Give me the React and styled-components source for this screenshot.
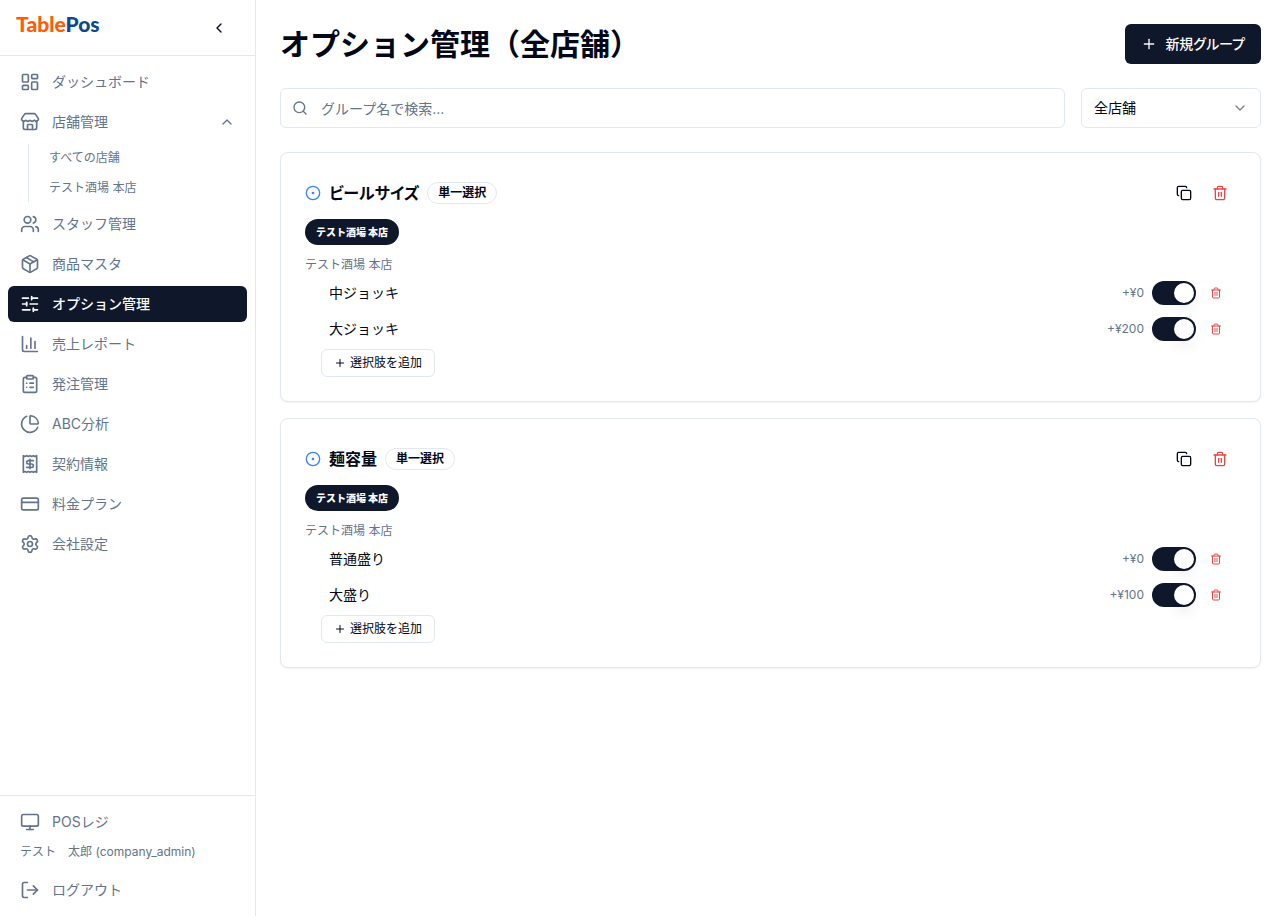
import React, { useState } from 'react';
import styled, { createGlobalStyle, css } from 'styled-components';
import {
    LayoutDashboard, Store, Users, Package, SlidersHorizontal, ChartColumn,
    ClipboardList, ChartPie, CreditCard, Settings, Monitor, LogOut,
    ChevronLeft, ChevronUp, ChevronDown, Plus, Search, Copy, Trash2, CircleDot,
} from 'lucide-react';

const colors = {
    text: '#020817',
    muted: '#64748b',
    border: '#e2e8f0',
    primary: '#0f172a',
    light: '#f8fafc',
    danger: '#ef4444',
    info: '#3b82f6',
};

const GlobalStyle = createGlobalStyle`
*, *::before, *::after {
    box-sizing: border-box;
}
body {
    margin: 0;
    background: white;
    color: ${colors.text};
    font-family: Inter, 'Noto Sans CJK JP', sans-serif;
    font-size: 14px;
    line-height: 20px;
}
h1, h2, p, ul {
    margin: 0;
    padding: 0;
}
ul {
    list-style: none;
}
button, input, select {
    font: inherit;
    color: inherit;
}
button {
    border: 0;
    background: none;
    padding: 0;
    cursor: pointer;
}
svg {
    flex-shrink: 0;
}
`;

const Layout = styled.div`
    display: grid;
    grid-template-columns: 256px 1fr;
    min-height: 100vh;
`;

const Sidebar = styled.aside`
    display: flex;
    flex-direction: column;
    border-right: 1px solid ${colors.border};
    color: ${colors.muted};
`;

const SidebarHeader = styled.div`
    display: flex;
    align-items: center;
    justify-content: space-between;
    height: 56px;
    padding: 0 16px;
    border-bottom: 1px solid ${colors.border};
`;

const Logo = styled.a`
    align-self: flex-start;
    padding-top: 10px;
    color: #ff5c0a;
    font-family: Lato, sans-serif;
    font-size: 21px;
    font-weight: 900;
    line-height: 28px;
    text-decoration: none;
    span {
        color: #0b4a8a;
    }
`;

const CollapseButton = styled.button`
    display: flex;
    align-items: center;
    justify-content: center;
    width: 40px;
    height: 40px;
    color: ${colors.text};
`;

const Nav = styled.nav`
    flex: 1;
    padding: 8px;
`;

const NavList = styled.ul`
    display: flex;
    flex-direction: column;
    gap: 4px;
`;

const navItem = css`
    display: flex;
    align-items: center;
    gap: 12px;
    width: 100%;
    height: 36px;
    padding: 0 12px;
    border-radius: 6px;
    text-align: left;
    text-decoration: none;
    color: ${colors.muted};
`;

const NavLink = styled.a`
    ${navItem}
    ${({ $active }) => $active && css`
        background: ${colors.primary};
        color: ${colors.light};
        font-weight: 500;
    `}
`;

const NavButton = styled.button`
    ${navItem}
    span {
        flex: 1;
    }
`;

const SubList = styled.ul`
    display: flex;
    flex-direction: column;
    gap: 2px;
    margin: 4px 0 0 20px;
    padding-left: 8px;
    border-left: 1px solid ${colors.border};
`;

const SubLink = styled.a`
    display: block;
    padding: 6px 12px;
    color: ${colors.muted};
    font-size: 12px;
    line-height: 16px;
    text-decoration: none;
`;

const SidebarFooter = styled.div`
    padding: 8px;
    border-top: 1px solid ${colors.border};
`;

const UserName = styled.p`
    padding: 4px 12px;
    margin-bottom: 8px;
    font-size: 12px;
    line-height: 16px;
`;

const Main = styled.main`
    display: flex;
    flex-direction: column;
    gap: 24px;
    min-width: 0;
    padding: 24px;
`;

const PageHeader = styled.header`
    display: flex;
    align-items: center;
    justify-content: space-between;
`;

const Title = styled.h1`
    font-size: 30px;
    font-weight: 700;
    line-height: 36px;
`;

const PrimaryButton = styled.button`
    display: flex;
    align-items: center;
    gap: 8px;
    height: 40px;
    padding: 0 16px;
    border-radius: 6px;
    background: ${colors.primary};
    color: ${colors.light};
    font-weight: 500;
    font-feature-settings: 'palt';
`;

const Filters = styled.div`
    display: flex;
    gap: 16px;
`;

const fieldBox = css`
    display: flex;
    align-items: center;
    height: 40px;
    border: 1px solid ${colors.border};
    border-radius: 6px;
    background: white;
`;

const SearchBox = styled.label`
    ${fieldBox}
    flex: 1;
    gap: 13px;
    padding: 0 12px 0 11px;
    color: ${colors.muted};
`;

const SearchInput = styled.input`
    flex: 1;
    min-width: 0;
    height: 100%;
    padding: 0;
    border: 0;
    outline: 0;
    background: none;
    color: ${colors.text};
    &::placeholder {
        color: ${colors.muted};
        opacity: 1;
    }
`;

const SelectBox = styled.label`
    display: grid;
    align-items: center;
    width: 180px;
    svg {
        grid-area: 1 / 1;
        justify-self: end;
        margin-right: 13px;
        opacity: 0.5;
        pointer-events: none;
    }
`;

const StoreSelect = styled.select`
    ${fieldBox}
    grid-area: 1 / 1;
    width: 100%;
    padding: 0 36px 0 12px;
    appearance: none;
`;

const Groups = styled.div`
    display: flex;
    flex-direction: column;
    gap: 16px;
`;

const Card = styled.section`
    padding: 24px;
    border: 1px solid ${colors.border};
    border-radius: 8px;
    background: white;
    box-shadow: 0 1px 2px rgba(0, 0, 0, 0.05);
`;

const CardHeader = styled.div`
    display: flex;
    align-items: center;
    gap: 8px;
    height: 32px;
    margin-bottom: 10px;
`;

const GroupName = styled.h2`
    font-size: 16px;
    font-weight: 600;
    line-height: 24px;
    font-feature-settings: 'palt';
`;

const TypeBadge = styled.span`
    padding: 2px 10px;
    border: 1px solid ${colors.border};
    border-radius: 11px;
    font-size: 12px;
    font-weight: 600;
    line-height: 16px;
`;

const CardActions = styled.div`
    display: flex;
    gap: 4px;
    margin-left: auto;
`;

const IconButton = styled.button`
    display: flex;
    align-items: center;
    justify-content: center;
    width: ${({ $size }) => $size}px;
    height: ${({ $size }) => $size}px;
    color: ${({ $danger }) => ($danger ? colors.danger : colors.text)};
`;

const StoreBadge = styled.button`
    display: block;
    height: 26px;
    padding: 0 11px;
    border-radius: 13px;
    background: ${colors.primary};
    color: ${colors.light};
    font-size: 10px;
    font-weight: 900;
    line-height: 16px;
`;

const StoreLabel = styled.p`
    margin: 12px 0 2px;
    color: ${colors.muted};
    font-size: 12px;
    line-height: 16px;
`;

const Choices = styled.div`
    padding-left: 16px;
`;

const ChoiceRow = styled.li`
    display: flex;
    align-items: center;
    gap: 8px;
    height: 36px;
    padding: 0 8px;
`;

const ChoiceName = styled.span`
    flex: 1;
`;

const Price = styled.span`
    color: ${colors.muted};
    font-size: 12px;
    line-height: 16px;
`;

const Switch = styled.input`
    appearance: none;
    display: flex;
    width: 44px;
    height: 24px;
    margin: 0;
    padding: 2px;
    border-radius: 12px;
    background: ${colors.border};
    cursor: pointer;
    &::before {
        content: '';
        width: 20px;
        height: 20px;
        border-radius: 50%;
        background: white;
        box-shadow: 0 10px 15px -3px rgba(0, 0, 0, 0.1), 0 4px 6px -4px rgba(0, 0, 0, 0.1);
    }
    &:checked {
        justify-content: flex-end;
        background: ${colors.primary};
    }
`;

const AddButton = styled.button`
    display: flex;
    align-items: center;
    gap: 4px;
    height: 28px;
    margin-top: 2px;
    padding: 0 12px;
    border: 1px solid ${colors.border};
    border-radius: 6px;
    font-size: 12px;
    line-height: 16px;
`;

const Receipt = ({ size }) => (
    <svg width={size} height={size} viewBox="0 0 24 24" fill="none" stroke="currentColor" strokeWidth="2" strokeLinecap="round" strokeLinejoin="round">
        <path d="M4 2v20l2-1 2 1 2-1 2 1 2-1 2 1 2-1 2 1V2l-2 1-2-1-2 1-2-1-2 1-2-1-2 1Z" />
        <path d="M16 8h-6a2 2 0 1 0 0 4h4a2 2 0 1 1 0 4H8" />
        <path d="M12 17.5v-11" />
    </svg>
);

const navItems = [
    { label: 'ダッシュボード', icon: LayoutDashboard },
    { label: '店舗管理', icon: Store, children: ['すべての店舗', 'テスト酒場 本店'] },
    { label: 'スタッフ管理', icon: Users },
    { label: '商品マスタ', icon: Package },
    { label: 'オプション管理', icon: SlidersHorizontal, active: true },
    { label: '売上レポート', icon: ChartColumn },
    { label: '発注管理', icon: ClipboardList },
    { label: 'ABC分析', icon: ChartPie },
    { label: '契約情報', icon: Receipt },
    { label: '料金プラン', icon: CreditCard },
    { label: '会社設定', icon: Settings },
];

const groups = [
    {
        name: 'ビールサイズ',
        store: 'テスト酒場 本店',
        choices: [
            { name: '中ジョッキ', price: 0 },
            { name: '大ジョッキ', price: 200 },
        ],
    },
    {
        name: '麺容量',
        store: 'テスト酒場 本店',
        choices: [
            { name: '普通盛り', price: 0 },
            { name: '大盛り', price: 100 },
        ],
    },
];

const NavEntry = ({ item }) => {
    const [open, setOpen] = useState(true);
    const Icon = item.icon;

    if (!item.children) {
        return (
            <li>
                <NavLink href="#" $active={item.active} aria-current={item.active ? 'page' : undefined}>
                    <Icon size={20} />
                    {item.label}
                </NavLink>
            </li>
        );
    }

    return (
        <li>
            <NavButton type="button" aria-expanded={open} onClick={() => setOpen(!open)}>
                <Icon size={20} />
                <span>{item.label}</span>
                {open ? <ChevronUp size={16} /> : <ChevronDown size={16} />}
            </NavButton>
            {open && (
                <SubList>
                    {item.children.map((child) => (
                        <li key={child}><SubLink href="#">{child}</SubLink></li>
                    ))}
                </SubList>
            )}
        </li>
    );
};

const GroupCard = ({ group }) => (
    <Card>
        <CardHeader>
            <CircleDot size={16} color={colors.info} />
            <GroupName>{group.name}</GroupName>
            <TypeBadge>単一選択</TypeBadge>
            <CardActions>
                <IconButton type="button" $size={32} aria-label="複製"><Copy size={16} /></IconButton>
                <IconButton type="button" $size={32} $danger aria-label="削除"><Trash2 size={16} /></IconButton>
            </CardActions>
        </CardHeader>
        <StoreBadge type="button">{group.store}</StoreBadge>
        <StoreLabel>{group.store}</StoreLabel>
        <Choices>
            <ul>
                {group.choices.map((choice) => (
                    <ChoiceRow key={choice.name}>
                        <ChoiceName>{choice.name}</ChoiceName>
                        <Price>+¥{choice.price}</Price>
                        <Switch type="checkbox" role="switch" defaultChecked aria-label={choice.name} />
                        <IconButton type="button" $size={24} $danger aria-label={`${choice.name}を削除`}>
                            <Trash2 size={12} />
                        </IconButton>
                    </ChoiceRow>
                ))}
            </ul>
            <AddButton type="button">
                <Plus size={12} />
                選択肢を追加
            </AddButton>
        </Choices>
    </Card>
);

export default () => {
    return (
        <>
            <GlobalStyle />
            <Layout>
                <Sidebar>
                    <SidebarHeader>
                        <Logo href="#">Table<span>Pos</span></Logo>
                        <CollapseButton type="button" aria-label="メニューを閉じる">
                            <ChevronLeft size={16} />
                        </CollapseButton>
                    </SidebarHeader>
                    <Nav>
                        <NavList>
                            {navItems.map((item) => <NavEntry key={item.label} item={item} />)}
                        </NavList>
                    </Nav>
                    <SidebarFooter>
                        <NavLink href="#"><Monitor size={20} />POSレジ</NavLink>
                        <UserName>テスト　太郎 (company_admin)</UserName>
                        <NavButton type="button"><LogOut size={20} />ログアウト</NavButton>
                    </SidebarFooter>
                </Sidebar>
                <Main>
                    <PageHeader>
                        <Title>オプション管理（全店舗）</Title>
                        <PrimaryButton type="button"><Plus size={16} />新規グループ</PrimaryButton>
                    </PageHeader>
                    <Filters>
                        <SearchBox>
                            <Search size={16} />
                            <SearchInput type="text" aria-label="グループ名で検索" placeholder="グループ名で検索..." />
                        </SearchBox>
                        <SelectBox>
                            <StoreSelect aria-label="店舗" defaultValue="all">
                                <option value="all">全店舗</option>
                                <option value="main">テスト酒場 本店</option>
                            </StoreSelect>
                            <ChevronDown size={16} />
                        </SelectBox>
                    </Filters>
                    <Groups>
                        {groups.map((group) => <GroupCard key={group.name} group={group} />)}
                    </Groups>
                </Main>
            </Layout>
        </>
    );
}
